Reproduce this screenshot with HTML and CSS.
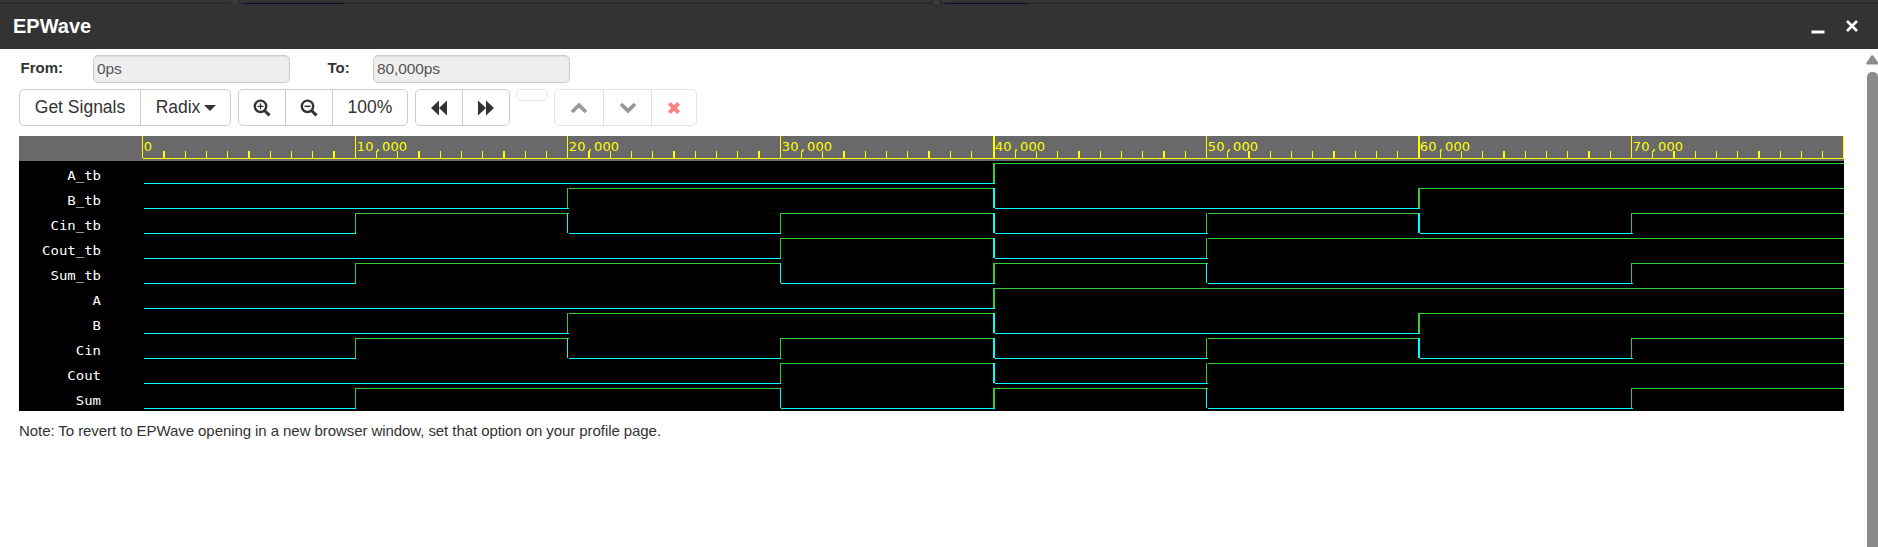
FILE: index.html
```html
<!DOCTYPE html>
<html lang="en">
<head>
<meta charset="utf-8">
<title>EPWave</title>
<link rel="stylesheet" href="styles.css">
</head>
<body>
<div class="backdrop"><i class="seam seam-a"></i><i class="tab tab-a"></i><i class="seam seam-b"></i><i class="tab tab-b"></i></div>
<header class="titlebar">
  <h1 class="title">EPWave</h1>
  <div class="window-actions">
    <svg width="14" height="14" viewBox="0 0 14 14"><rect x="0.500" y="11.500" width="13" height="3" fill="#fff"/></svg>
    <svg width="14" height="14" viewBox="0 0 14 14"><path d="M2 2L12 12M12 2L2 12" stroke="#fff" stroke-width="2.6"/></svg>
  </div>
</header>
<main class="panel">
  <div class="content">
    <div class="range">
      <label class="from-label">From:</label><div class="field">0ps</div>
      <label class="to-label">To:</label><div class="field">80,000ps</div>
    </div>
    <div class="toolbar">
      <div class="group">
        <button class="btn w-signals">Get Signals</button>
        <button class="btn w-radix">Radix <span class="caret"></span></button>
      </div>
      <div class="group">
        <button class="btn w-zoom"><svg width="18" height="18" viewBox="0 0 18 18" fill="none" stroke="#333"><circle cx="7.5" cy="7.3" r="5.7" stroke-width="2.4"/><path d="M11.5 11.5L16.5 16.4" stroke-width="3"/><path d="M4.500 7.300h6M7.500 4.300v6" stroke-width="1.3"/></svg></button>
        <button class="btn w-zoom"><svg width="18" height="18" viewBox="0 0 18 18" fill="none" stroke="#333"><circle cx="7.5" cy="7.3" r="5.7" stroke-width="2.4"/><path d="M11.5 11.5L16.5 16.4" stroke-width="3"/><path d="M4.500 7.300h6" stroke-width="1.5"/></svg></button>
        <button class="btn w-percent">100%</button>
      </div>
      <div class="group">
        <button class="btn w-seek"><svg width="16" height="16" viewBox="0 0 16 16" fill="#333"><path d="M8 .5v15L0 8zM16 .5v15L8 8z"/></svg></button>
        <button class="btn w-seek"><svg width="16" height="16" viewBox="0 0 16 16" fill="#333"><path d="M0 .5v15L8 8zM8 .5v15L16 8z"/></svg></button>
      </div>
      <div class="empty-group"></div>
      <div class="group faded">
        <button class="btn w-up"><svg width="18" height="12" viewBox="0 0 18 12"><path d="M2 10L9 3.2L16 10" fill="none" stroke="#999" stroke-width="3.8"/></svg></button>
        <button class="btn w-down"><svg width="18" height="12" viewBox="0 0 18 12"><path d="M2 2L9 8.8L16 2" fill="none" stroke="#999" stroke-width="3.8"/></svg></button>
        <button class="btn w-remove"><svg width="14" height="14" viewBox="0 0 14 14"><path d="M2.3 2.3L11.7 11.7M11.7 2.3L2.3 11.7" stroke="#ff8080" stroke-width="4"/></svg></button>
      </div>
    </div>
    <svg class="wave" id="wave" width="1825" height="275" viewBox="19 136 1825 275" shape-rendering="crispEdges"></svg>
    <p class="note">Note: To revert to EPWave opening in a new browser window, set that option on your profile page.</p>
  </div>
  <div class="scrollbar">
    <svg width="13" height="10" viewBox="0 0 13 10"><path d="M1.2 9.5Q0 9 .6 7.600L5 1Q6.300 -.5 7.600 1L12 7.600Q12.600 9 11.400 9.500Z" fill="#8b8b8b"/></svg>
    <div class="thumb"></div>
  </div>
</main>
<script src="wave.js"></script>
</body>
</html>
```
FILE: styles.css
```css
* { box-sizing: border-box; }
body {
  margin: 0;
  height: 547px;
  overflow: hidden;
  display: flex;
  flex-direction: column;
  background: #fff;
  color: #333;
  font-family: "Liberation Sans", Arial, sans-serif;
}
.backdrop { height: 4px; flex: none; background: linear-gradient(#353535 0 2px, #292929 3px); display: flex; align-items: flex-end; }
.seam { width: 9px; height: 4px; background: #3b3b3b; border: solid #262626; border-width: 0 1px; }
.seam-a { margin-left: 230px; }
.seam-b { margin-left: 588px; }
.tab { height: 1px; background: #0c0c2c; }
.tab-a { width: 100px; margin-left: 5px; }
.tab-b { width: 83px; margin-left: 4px; }
.titlebar {
  height: 45px;
  flex: none;
  background: #333;
  display: flex;
  justify-content: space-between;
  align-items: center;
  padding: 0 19px 1px 13px;
}
.title { margin: 0; color: #fff; font-size: 20px; line-height: 24px; padding-bottom: 1px; }
.window-actions { display: flex; gap: 20px; }
.window-actions svg { display: block; overflow: visible; }
.panel { flex: 1; display: flex; justify-content: space-between; }
.content { width: 1825px; margin-left: 19px; display: flex; flex-direction: column; }
.range { display: flex; height: 28px; margin-top: 6px; font-size: 15px; }
.range label { font-weight: bold; line-height: 26px; padding-left: 1.5px; }
.from-label { width: 74px; }
.to-label { width: 47px; margin-left: 36px; }
.field {
  width: 197px;
  height: 28px;
  background: #eee;
  border: 1px solid #ccc;
  border-radius: 5px;
  box-shadow: inset 0 1px 1px rgba(0,0,0,.075);
  padding-left: 3px;
  line-height: 26px;
  color: #555;
  font-size: 15.5px;
  letter-spacing: -0.1px;
}
.toolbar { display: flex; align-items: flex-start; height: 37px; margin-top: 6px; }
.group { display: flex; height: 37px; border: 1px solid #ccc; border-radius: 5px; margin-right: 7px; }
.btn {
  background: none;
  border: 0;
  border-right: 1px solid #ccc;
  padding: 0;
  display: flex;
  align-items: center;
  justify-content: center;
  font-family: inherit;
  font-size: 17.5px;
  color: #333;
}
.btn:last-child { border-right: 0; }
.w-signals { width: 121px; }
.w-radix { width: 89px; gap: 4px; }
.caret { border: solid transparent; border-width: 6px 6px 0; border-top-color: #333; margin-right: -1px; }
.w-zoom { width: 47px; }
.w-percent { width: 74px; }
.w-seek { width: 47px; }
.w-seek:last-child { width: 46px; }
.empty-group { width: 32px; height: 12px; border: 1px solid #e5e5e5; border-radius: 5px; margin: 0 6px 0 -1px; }
.faded { border-color: #e5e5e5; margin-right: 0; }
.faded .btn { border-color: #e0e0e0; }
.w-up { width: 49px; }
.w-down { width: 48px; }
.w-remove { width: 44px; }
.wave { display: block; margin-top: 10px; }
.ruler-bg { fill: #696969; }
.screen { fill: #000; }
.tick { fill: #ff0; }
.high { fill: #32cd32; }
.low { fill: #0ff; }
.time { font: 13px "DejaVu Sans", sans-serif; fill: #ff0; text-anchor: middle; }
.name { font: 14px "DejaVu Sans Mono", monospace; fill: #fff; text-anchor: end; }
.note { margin: 10px 0 0; font-size: 15px; line-height: 20px; letter-spacing: -0.07px; }
.scrollbar { width: 15px; background: #fcfcfc; display: flex; flex-direction: column; align-items: flex-end; padding-top: 6px; }
.scrollbar svg { margin-right: -1px; }
.thumb { width: 11px; margin-top: 7px; flex: 1; background: #8b8b8b; border-radius: 5px 5px 0 0; }
```
FILE: wave.js
```js
const svg = document.getElementById('wave');
const NS = 'http://www.w3.org/2000/svg';

function add(tag, attrs, text) {
  const el = document.createElementNS(NS, tag);
  for (const key in attrs) el.setAttribute(key, attrs[key]);
  if (text !== undefined) el.textContent = text;
  svg.appendChild(el);
}
function rect(cls, x, y, width, height) {
  add('rect', { class: cls, x, y, width, height });
}

// Left edge and width of the grid line for the k-th thousand picoseconds.
function gridLine(k) {
  const x = 142.25 + 21.25 * k + (k >= 40 ? 1.25 : 0);
  const left = Math.ceil(x - 0.5);
  return { left, width: Math.ceil(x + 0.75) - left };
}

rect('screen', 19, 136, 1825, 275);
rect('ruler-bg', 19, 136, 1825, 25);
rect('tick', 143, 158, 1701, 1);
for (let k = 0; k <= 80; k++) {
  const { left, width } = gridLine(k);
  const major = k % 10 === 0;
  rect('tick', left, major ? 136 : 151, width, major ? 22 : 7);
  if (major && k < 80) {
    const label = k ? k + ',000' : '0';
    const xs = [...label].map((c, i) => left + 6 + i * 8.4).join(' ');
    add('text', { class: 'time', x: xs, y: 151 }, label);
  }
}

const signals = [
  ['A_tb', '00001111'], ['B_tb', '00110011'], ['Cin_tb', '01010101'],
  ['Cout_tb', '00010111'], ['Sum_tb', '01101001'],
  ['A', '00001111'], ['B', '00110011'], ['Cin', '01010101'],
  ['Cout', '00010111'], ['Sum', '01101001']
];
// Extra pixels a level runs past, or starts after, a transition.
const overrun = { 2: 1, 5: 1, 7: 1 };
const gap = { 2: 1, 5: 1 };

signals.forEach(([name, bits], row) => {
  const top = 163 + row * 25;
  add('text', { class: 'name', transform: `translate(101 ${top + 17}) scale(1 .9)` }, name);
  let start = 0;
  for (let i = 1; i <= 8; i++) {
    if (i < 8 && bits[i] === bits[start]) continue;
    const cls = bits[start] === '1' ? 'high' : 'low';
    const from = gridLine(start * 10);
    const to = gridLine(i * 10);
    const x = start === 0 ? 144 : from.left + from.width + (gap[start] || 0);
    const end = i === 8 ? 1844 : to.left + to.width + (overrun[i] || 0);
    rect(cls, x, top + (cls === 'high' ? 0 : 20), end - x, 1);
    if (i < 8) rect(bits[i] === '1' ? 'high' : 'low', to.left, top, to.width, 20);
    start = i;
  }
});
```
